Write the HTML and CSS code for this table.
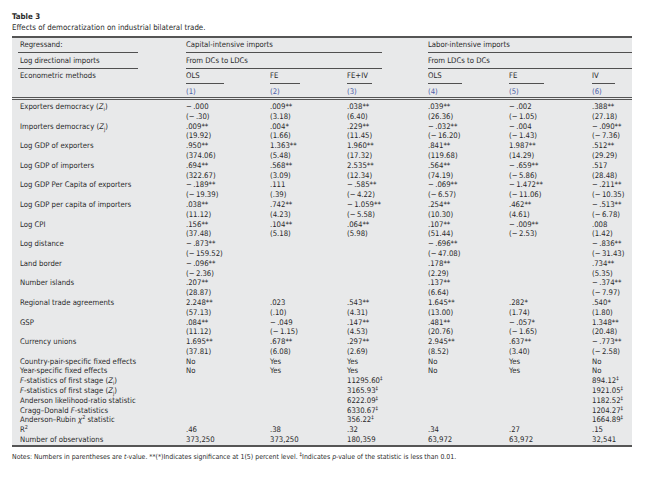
FILE: index.html
```html
<!DOCTYPE html>
<html lang="en">
<head>
<meta charset="utf-8">
<title>Table 3</title>
<link rel="stylesheet" href="styles.css">
</head>
<body>
<div class="page">
  <div class="cap-title">Table 3</div>
  <div class="cap-sub">Effects of democratization on industrial bilateral trade.</div>
  <div class="tbl">
    <table>
      <colgroup>
        <col class="c0"><col class="c1"><col class="c2"><col class="c3"><col class="c4"><col class="c5"><col class="c6">
      </colgroup>
      <thead>
        <tr class="hr">
          <td class="lab"><div>Regressand:</div><div class="rule rl-lab"></div></td>
          <td colspan="3"><div>Capital-intensive imports</div><div class="rule rl-cap"></div></td>
          <td colspan="3"><div>Labor-intensive imports</div><div class="rule rl-lab2"></div></td>
        </tr>
        <tr class="hr">
          <td class="lab"><div>Log directional imports</div><div class="rule rl-lab"></div></td>
          <td colspan="3"><div>From DCs to LDCs</div><div class="rule rl-cap"></div></td>
          <td colspan="3"><div>From LDCs to DCs</div><div class="rule rl-lab2"></div></td>
        </tr>
        <tr class="hr">
          <td class="lab"><div>Econometric methods</div></td>
          <td><div>OLS</div><div class="rule w38"></div></td>
          <td><div>FE</div><div class="rule w30"></div></td>
          <td><div>FE+IV</div><div class="rule w25"></div></td>
          <td><div>OLS</div><div class="rule w34"></div></td>
          <td><div>FE</div><div class="rule w35"></div></td>
          <td><div>IV</div><div class="rule w23"></div></td>
        </tr>
        <tr class="hn">
          <td class="lab"></td>
          <td>(1)</td><td>(2)</td><td>(3)</td><td>(4)</td><td>(5)</td><td>(6)</td>
        </tr>
      </thead>
      <tbody>
        <tr class="first"><td class="lab">Exporters democracy (<i>Z</i><sub>i</sub>)</td><td>&minus;&thinsp;.000</td><td>.009**</td><td>.038**</td><td>.039**</td><td>&minus;&thinsp;.002</td><td>.388**</td></tr>
        <tr><td class="lab"></td><td>(&minus;&thinsp;.30)</td><td>(3.18)</td><td>(6.40)</td><td>(26.36)</td><td>(&minus;&thinsp;1.05)</td><td>(27.18)</td></tr>
        <tr><td class="lab">Importers democracy (<i>Z</i><sub>j</sub>)</td><td>.009**</td><td>.004*</td><td>.229**</td><td>&minus;&thinsp;.032**</td><td>&minus;&thinsp;.004</td><td>&minus;&thinsp;.090**</td></tr>
        <tr><td class="lab"></td><td>(19.92)</td><td>(1.66)</td><td>(11.45)</td><td>(&minus;&thinsp;16.20)</td><td>(&minus;&thinsp;1.43)</td><td>(&minus;&thinsp;7.36)</td></tr>
        <tr><td class="lab">Log GDP of exporters</td><td>.950**</td><td>1.363**</td><td>1.960**</td><td>.841**</td><td>1.987**</td><td>.512**</td></tr>
        <tr><td class="lab"></td><td>(374.06)</td><td>(5.48)</td><td>(17.32)</td><td>(119.68)</td><td>(14.29)</td><td>(29.29)</td></tr>
        <tr><td class="lab">Log GDP of importers</td><td>.694**</td><td>.568**</td><td>2.535**</td><td>.564**</td><td>&minus;&thinsp;.659**</td><td>.517</td></tr>
        <tr><td class="lab"></td><td>(322.67)</td><td>(3.09)</td><td>(12.34)</td><td>(74.19)</td><td>(&minus;&thinsp;5.86)</td><td>(28.48)</td></tr>
        <tr><td class="lab">Log GDP Per Capita of exporters</td><td>&minus;&thinsp;.189**</td><td>.111</td><td>&minus;&thinsp;.585**</td><td>&minus;&thinsp;.069**</td><td>&minus;&thinsp;1.472**</td><td>&minus;&thinsp;.211**</td></tr>
        <tr><td class="lab"></td><td>(&minus;&thinsp;19.39)</td><td>(.39)</td><td>(&minus;&thinsp;4.22)</td><td>(&minus;&thinsp;6.57)</td><td>(&minus;&thinsp;11.06)</td><td>(&minus;&thinsp;10.35)</td></tr>
        <tr><td class="lab">Log GDP per capita of importers</td><td>.038**</td><td>.742**</td><td>&minus;&thinsp;1.059**</td><td>.254**</td><td>.462**</td><td>&minus;&thinsp;.513**</td></tr>
        <tr><td class="lab"></td><td>(11.12)</td><td>(4.23)</td><td>(&minus;&thinsp;5.58)</td><td>(10.30)</td><td>(4.61)</td><td>(&minus;&thinsp;6.78)</td></tr>
        <tr><td class="lab">Log CPI</td><td>.156**</td><td>.104**</td><td>.064**</td><td>.107**</td><td>&minus;&thinsp;.009**</td><td>.008</td></tr>
        <tr><td class="lab"></td><td>(37.48)</td><td>(5.18)</td><td>(5.98)</td><td>(51.44)</td><td>(&minus;&thinsp;2.53)</td><td>(1.42)</td></tr>
        <tr><td class="lab">Log distance</td><td>&minus;&thinsp;.873**</td><td></td><td></td><td>&minus;&thinsp;.696**</td><td></td><td>&minus;&thinsp;.836**</td></tr>
        <tr><td class="lab"></td><td>(&minus;&thinsp;159.52)</td><td></td><td></td><td>(&minus;&thinsp;47.08)</td><td></td><td>(&minus;&thinsp;31.43)</td></tr>
        <tr><td class="lab">Land border</td><td>&minus;&thinsp;.096**</td><td></td><td></td><td>.178**</td><td></td><td>.734**</td></tr>
        <tr><td class="lab"></td><td>(&minus;&thinsp;2.36)</td><td></td><td></td><td>(2.29)</td><td></td><td>(5.35)</td></tr>
        <tr><td class="lab">Number islands</td><td>.207**</td><td></td><td></td><td>.137**</td><td></td><td>&minus;&thinsp;.374**</td></tr>
        <tr><td class="lab"></td><td>(28.87)</td><td></td><td></td><td>(6.64)</td><td></td><td>(&minus;&thinsp;7.97)</td></tr>
        <tr><td class="lab">Regional trade agreements</td><td>2.248**</td><td>.023</td><td>.543**</td><td>1.645**</td><td>.282*</td><td>.540*</td></tr>
        <tr><td class="lab"></td><td>(57.13)</td><td>(.10)</td><td>(4.31)</td><td>(13.00)</td><td>(1.74)</td><td>(1.80)</td></tr>
        <tr><td class="lab">GSP</td><td>.084**</td><td>&minus;&thinsp;.049</td><td>.147**</td><td>.481**</td><td>&minus;&thinsp;.057*</td><td>1.348**</td></tr>
        <tr><td class="lab"></td><td>(11.12)</td><td>(&minus;&thinsp;1.15)</td><td>(4.53)</td><td>(20.76)</td><td>(&minus;&thinsp;1.65)</td><td>(20.48)</td></tr>
        <tr><td class="lab">Currency unions</td><td>1.695**</td><td>.678**</td><td>.297**</td><td>2.945**</td><td>.637**</td><td>&minus;&thinsp;.773**</td></tr>
        <tr><td class="lab"></td><td>(37.81)</td><td>(6.08)</td><td>(2.69)</td><td>(8.52)</td><td>(3.40)</td><td>(&minus;&thinsp;2.58)</td></tr>
        <tr><td class="lab">Country-pair-specific fixed effects</td><td>No</td><td>Yes</td><td>Yes</td><td>No</td><td>Yes</td><td>No</td></tr>
        <tr><td class="lab">Year-specific fixed effects</td><td>No</td><td>Yes</td><td>Yes</td><td>No</td><td>Yes</td><td>No</td></tr>
        <tr><td class="lab"><i>F</i>-statistics of first stage (<i>Z</i><sub>i</sub>)</td><td></td><td></td><td>11295.60<sup>&Dagger;</sup></td><td></td><td></td><td>894.12<sup>&Dagger;</sup></td></tr>
        <tr><td class="lab"><i>F</i>-statistics of first stage (<i>Z</i><sub>j</sub>)</td><td></td><td></td><td>3165.93<sup>&Dagger;</sup></td><td></td><td></td><td>1921.05<sup>&Dagger;</sup></td></tr>
        <tr><td class="lab">Anderson likelihood-ratio statistic</td><td></td><td></td><td>6222.09<sup>&Dagger;</sup></td><td></td><td></td><td>1182.52<sup>&Dagger;</sup></td></tr>
        <tr><td class="lab">Cragg&ndash;Donald <i>F</i>-statistics</td><td></td><td></td><td>6330.67<sup>&Dagger;</sup></td><td></td><td></td><td>1204.27<sup>&Dagger;</sup></td></tr>
        <tr><td class="lab">Anderson&ndash;Rubin <i>&chi;</i><sup>2</sup> statistic</td><td></td><td></td><td>356.22<sup>&Dagger;</sup></td><td></td><td></td><td>1664.89<sup>&Dagger;</sup></td></tr>
        <tr><td class="lab">R<sup>2</sup></td><td>.46</td><td>.38</td><td>.32</td><td>.34</td><td>.27</td><td>.15</td></tr>
        <tr class="last"><td class="lab">Number of observations</td><td>373,250</td><td>373,250</td><td>180,359</td><td>63,972</td><td>63,972</td><td>32,541</td></tr>
      </tbody>
    </table>
  </div>
  <div class="notes">Notes: Numbers in parentheses are <i>t</i>-value. **(*)Indicates significance at 1(5) percent level. <sup>&Dagger;</sup>Indicates <i>p</i>-value of the statistic is less than 0.01.</div>
</div>
</body>
</html>
```
FILE: styles.css
```css
html, body {
  margin: 0;
  padding: 0;
  background: #ffffff;
}

.page {
  padding: 11px 16px 0 12px;
  font-family: "DejaVu Sans Condensed", "DejaVu Sans", sans-serif;
  font-stretch: condensed;
  color: #2a2a2a;
}

.cap-title {
  font-size: 7.8px;
  font-weight: bold;
  line-height: 11px;
}

.cap-sub {
  font-size: 7.85px;
  line-height: 11px;
  margin-bottom: 3px;
}

.tbl {
  width: 620px;
  background: #e8e9ea;
  border-top: 2px solid #555555;
  border-bottom: 2px solid #555555;
}

table {
  width: 620px;
  table-layout: fixed;
  border-collapse: collapse;
  border-spacing: 0;
  font-size: 7.7px;
}

.c0 { width: 174px; }
.c1 { width: 84px; }
.c2 { width: 77px; }
.c3 { width: 81px; }
.c4 { width: 81px; }
.c5 { width: 83px; }
.c6 { width: 40px; }

td {
  padding: 0;
  line-height: 9.8px;
  height: 9.8px;
  white-space: nowrap;
  vertical-align: top;
  overflow: visible;
}

td.lab {
  padding-left: 8px;
}

.hr td {
  padding-top: 2px;
  padding-bottom: 0.3px;
  height: auto;
}

.rule {
  height: 0;
  border-bottom: 1px solid #505050;
  margin-top: 2.5px;
}

.rl-lab { width: 120px; margin-left: -2px; }
.rl-cap { width: 196px; }
.rl-lab2 { width: 204px; }
.w38 { width: 38px; }
.w30 { width: 30px; }
.w25 { width: 25px; }
.w34 { width: 34px; }
.w35 { width: 35px; }
.w23 { width: 23px; }

.hn td {
  color: #4f62a8;
  padding-top: 2px;
  padding-bottom: 0.4px;
  border-bottom: 3px double #555555;
}

tbody tr.first td {
  padding-top: 2px;
}

tbody tr.last td {
  padding-bottom: 0.5px;
}

sub, sup {
  font-size: 5.5px;
  line-height: 0;
}

sub { vertical-align: -1.5px; }
sup { vertical-align: 3px; }

.notes {
  margin-top: 5px;
  font-size: 6.9px;
  line-height: 10px;
  white-space: nowrap;
}
```
